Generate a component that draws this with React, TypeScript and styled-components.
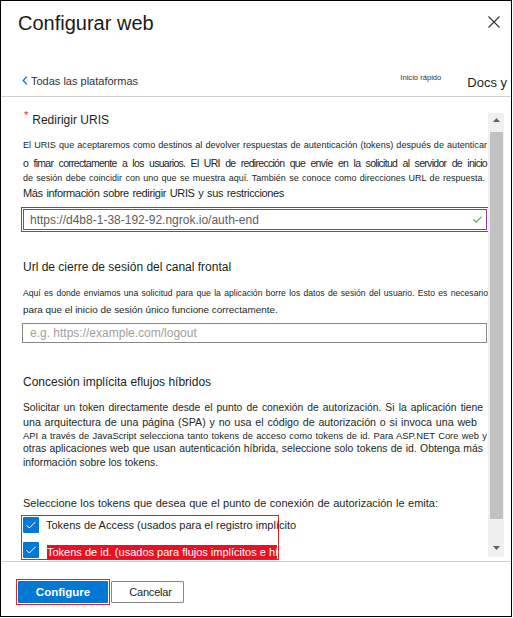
import React from 'react';
import styled, { createGlobalStyle } from 'styled-components';

const GlobalStyle = createGlobalStyle`
  html, body { margin: 0; padding: 0; background: #ffffff; }
  body { font-family: "Liberation Sans", Arial, sans-serif; color: #201f1e; }
  * { box-sizing: border-box; }
`;

const Dialog = styled.div`
  width: 512px;
  height: 617px;
  border: 1px solid #000;
  background: #fff;
  display: flex;
  flex-direction: column;
  overflow: hidden;
`;

const TitleRow = styled.header`
  flex: none;
  height: 44px;
  display: flex;
  align-items: center;
  justify-content: space-between;
  padding: 0 11px 0 17px;
`;

const Title = styled.h1`
  margin: 0;
  font-size: 20px;
  line-height: 24px;
  font-weight: 400;
  color: #1b1a19;
`;

const CloseButton = styled.button`
  border: none;
  background: transparent;
  padding: 0;
  width: 12px;
  height: 12px;
  margin-bottom: 3px;
  display: flex;
  cursor: pointer;
`;

const NavRow = styled.nav`
  flex: none;
  margin-top: 20px;
  height: 31px;
  display: flex;
  align-items: center;
  padding: 0 4px 0 21px;
  overflow: hidden;
  white-space: nowrap;
`;

const BackLink = styled.a`
  display: flex;
  align-items: center;
  gap: 3px;
  font-size: 11px;
  color: #323130;
  text-decoration: none;
`;

const QuickStart = styled.span`
  margin-left: auto;
  margin-bottom: 7px;
  font-size: 7.6px;
  color: #323130;
`;

const DocsLink = styled.span`
  margin-left: 26px;
  margin-top: 4px;
  font-size: 13px;
  color: #201f1e;
`;

const Separator = styled.div`
  flex: none;
  height: 1px;
  background: #d2d0ce;
`;

const ScrollArea = styled.main`
  flex: none;
  height: 464px;
  display: flex;
  overflow: hidden;
`;

const Content = styled.div`
  flex: 1;
  min-width: 0;
  padding-left: 22px;
  display: flex;
  flex-direction: column;
`;

const FieldLabel = styled.div<{ $mt: number }>`
  display: flex;
  align-items: center;
  height: 20px;
  margin-top: ${(p) => p.$mt}px;
  font-size: 12px;
  color: #201f1e;
  white-space: nowrap;
`;

const Required = styled.span`
  align-self: flex-start;
  color: #d13438;
  font-size: 11px;
  line-height: 11px;
  margin: 0 4px 0 1px;
`;

const Line = styled.div<{
  $size: number;
  $lh: number;
  $w?: number;
  $ls?: number;
  $mt?: number;
}>`
  flex: none;
  font-size: ${(p) => p.$size}px;
  line-height: ${(p) => p.$lh}px;
  height: ${(p) => p.$lh}px;
  letter-spacing: ${(p) => p.$ls ?? 0}px;
  margin-top: ${(p) => p.$mt ?? 0}px;
  width: ${(p) => (p.$w ? `${p.$w}px` : 'auto')};
  text-align: ${(p) => (p.$w ? 'justify' : 'left')};
  text-align-last: ${(p) => (p.$w ? 'justify' : 'auto')};
  color: #201f1e;
`;

const RedFrame = styled.div<{ $mt?: number; $w?: number }>`
  flex: none;
  border: 1px solid #e3202c;
  padding: 1px;
  margin-top: ${(p) => p.$mt ?? 0}px;
  margin-left: -2px;
  width: ${(p) => (p.$w ? `${p.$w}px` : 'auto')};
`;

const InputShell = styled.div<{ $border: string; $h: number; $ml?: number; $mt?: number; $pl?: number; $w?: number }>`
  flex: none;
  display: flex;
  align-items: center;
  height: ${(p) => p.$h}px;
  width: ${(p) => (p.$w ? `${p.$w}px` : 'auto')};
  margin-left: ${(p) => p.$ml ?? 0}px;
  margin-top: ${(p) => p.$mt ?? 0}px;
  border: 1px solid ${(p) => p.$border};
  padding: 0 4px 0 ${(p) => p.$pl ?? 6}px;
  background: #fff;
`;

const TextInput = styled.input<{ $tone: string }>`
  flex: 1;
  min-width: 0;
  border: none;
  outline: none;
  background: transparent;
  padding: 0;
  font-family: "Liberation Sans", Arial, sans-serif;
  font-size: 12px;
  color: ${(p) => p.$tone};
  &::placeholder {
    color: #a19f9d;
  }
`;

const CheckGroup = styled.div`
  flex: none;
  margin-top: 3px;
  margin-left: -2px;
  width: 258px;
  height: 45px;
  border: 1px solid #e3202c;
  padding: 1px 0 0 1px;
`;

const CheckRow = styled.label`
  display: flex;
  align-items: flex-start;
  gap: 7px;
  height: 25px;
  white-space: nowrap;
`;

const CheckBox = styled.span`
  flex: none;
  width: 16px;
  height: 16px;
  border-radius: 1px;
  background: #0078d4;
  display: flex;
  align-items: center;
  justify-content: center;
`;

const CheckText = styled.span`
  flex: none;
  display: block;
  font-size: 11px;
  line-height: 16px;
  color: #201f1e;
`;

const HighlightText = styled.span`
  flex: none;
  display: block;
  width: 230px;
  overflow: hidden;
  font-size: 11px;
  line-height: 14px;
  margin-top: 3px;
  margin-left: 1px;
  color: #ffffff;
  background: #e81123;
`;

const Scrollbar = styled.div`
  flex: none;
  width: 16px;
  margin: 16px 7px 4px 0;
  background: #f0f0f0;
  display: flex;
  flex-direction: column;
`;

const ScrollButton = styled.div<{ $h: number; $pt: number }>`
  flex: none;
  height: ${(p) => p.$h}px;
  padding-top: ${(p) => p.$pt}px;
  display: flex;
  justify-content: center;
  align-items: flex-start;
`;

const Thumb = styled.div`
  flex: none;
  height: 387px;
  margin: 0 1px 0 2px;
  background: #c1c1c1;
`;

const TrackRest = styled.div`
  flex: 1;
`;

const Footer = styled.footer`
  flex: 1;
  display: flex;
  align-items: flex-start;
  padding: 17px 0 0 15px;
`;

const ButtonRow = styled.div`
  display: flex;
  align-items: center;
  gap: 1px;
`;

const ButtonFrame = styled.div`
  border: 1px solid #e3202c;
  padding: 1px;
`;

const PrimaryButton = styled.button`
  width: 90px;
  height: 22px;
  border: none;
  border-radius: 1px;
  background: #0078d4;
  color: #fff;
  font-family: "Liberation Sans", Arial, sans-serif;
  font-weight: 700;
  font-size: 11.5px;
  padding: 0;
  display: block;
`;

const SecondaryButton = styled.button`
  width: 73px;
  height: 22px;
  border: 1px solid #8a8886;
  border-radius: 1px;
  background: #fff;
  color: #201f1e;
  font-family: "Liberation Sans", Arial, sans-serif;
  font-size: 11px;
  letter-spacing: -0.2px;
  padding: 0 0 0 6px;
`;

const Tri = ({ down }: { down?: boolean }) => (
  <svg width="7" height="4" viewBox="0 0 7 4">
    <polygon points={down ? '0,0 7,0 3.5,4' : '0,4 7,4 3.5,0'} fill="#606060" />
  </svg>
);

const WhiteCheck = () => (
  <svg width="12" height="10" viewBox="0 0 12 10">
    <polyline points="1.5,5.2 4.3,8 10.5,1.8" fill="none" stroke="#ffffff" strokeWidth="1" />
  </svg>
);

export default function App() {
  return (
    <>
      <GlobalStyle />
      <Dialog>
        <TitleRow>
          <Title>Configurar web</Title>
          <CloseButton aria-label="Cerrar">
            <svg width="12" height="12" viewBox="0 0 12 12">
              <path d="M0.5 0.5 L11.5 11.5 M11.5 0.5 L0.5 11.5" stroke="#323130" strokeWidth="1.1" />
            </svg>
          </CloseButton>
        </TitleRow>
        <NavRow>
          <BackLink href="#">
            <svg width="6" height="9" viewBox="0 0 6 9">
              <path d="M4.8 0.6 L1.2 4.5 L4.8 8.4" fill="none" stroke="#0078d4" strokeWidth="1.3" />
            </svg>
            Todas las plataformas
          </BackLink>
          <QuickStart>Inicio rápido</QuickStart>
          <DocsLink>Docs y</DocsLink>
        </NavRow>
        <Separator />
        <ScrollArea>
          <Content>
            <FieldLabel $mt={13}>
              <Required>*</Required>
              Redirigir URIS
            </FieldLabel>
            <Line $size={9.1} $lh={18} $w={464} $mt={6}>
              El URIS que aceptaremos como destinos al devolver respuestas de autenticación (tokens) después de autenticar
            </Line>
            <Line $size={10.5} $lh={18} $w={464} $ls={-0.7}>
              o fimar correctamente a los usuarios. El URI de redirección que envíe en la solicitud al servidor de inicio
            </Line>
            <Line $size={9} $lh={12} $w={462}>
              de sesión debe coincidir con uno que se muestra aquí. También se conoce como direcciones URL de respuesta.
            </Line>
            <Line $size={11} $lh={18} $w={261} $ls={-0.35}>
              Más información sobre redirigir URIS y sus restricciones
            </Line>
            <RedFrame $mt={5} $w={468}>
              <InputShell $border="#8a3ab9" $h={21}>
                <TextInput $tone="#605e5c" readOnly value="https://d4b8-1-38-192-92.ngrok.io/auth-end" />
                <svg width="9" height="7" viewBox="0 0 9 7">
                  <polyline points="0.5,3.5 3.2,6.2 8.5,0.7" fill="none" stroke="#5aa84a" strokeWidth="1.1" />
                </svg>
              </InputShell>
            </RedFrame>

            <FieldLabel $mt={25}>Url de cierre de sesión del canal frontal</FieldLabel>
            <Line $size={8.6} $lh={16} $w={465} $mt={8}>
              Aquí es donde enviamos una solicitud para que la aplicación borre los datos de sesión del usuario. Esto es necesario
            </Line>
            <Line $size={9.9} $lh={18}>
              para que el inicio de sesión único funcione correctamente.
            </Line>
            <InputShell $border="#8a8886" $h={20} $ml={-1} $mt={4} $pl={7} $w={465}>
              <TextInput $tone="#323130" placeholder="e.g. https://example.com/logout" />
            </InputShell>

            <FieldLabel $mt={29}>Concesión implícita eflujos híbridos</FieldLabel>
            <Line $size={10.3} $lh={15} $w={460} $mt={8}>
              Solicitar un token directamente desde el punto de conexión de autorización. Si la aplicación tiene
            </Line>
            <Line $size={10.7} $lh={14} $w={454}>
              una arquitectura de una página (SPA) y no usa el código de autorización o si invoca una web
            </Line>
            <Line $size={9.4} $lh={13} $w={464}>
              API a través de JavaScript selecciona tanto tokens de acceso como tokens de id. Para ASP.NET Core web y
            </Line>
            <Line $size={10.4} $lh={14} $w={460}>
              otras aplicaciones web que usan autenticación híbrida, seleccione solo tokens de id. Obtenga más
            </Line>
            <Line $size={10.4} $lh={14}>
              información sobre los tokens.
            </Line>

            <Line $size={11} $lh={18} $w={415} $mt={24}>
              Seleccione los tokens que desea que el punto de conexión de autorización le emita:
            </Line>
            <CheckGroup>
              <CheckRow>
                <CheckBox>
                  <WhiteCheck />
                </CheckBox>
                <CheckText>Tokens de Access (usados para el registro implícito</CheckText>
              </CheckRow>
              <CheckRow>
                <CheckBox>
                  <WhiteCheck />
                </CheckBox>
                <HighlightText>Tokens de id. (usados para flujos implícitos e híbridos)</HighlightText>
              </CheckRow>
            </CheckGroup>
          </Content>
          <Scrollbar>
            <ScrollButton $h={19} $pt={5}>
              <Tri />
            </ScrollButton>
            <Thumb />
            <TrackRest />
            <ScrollButton $h={17} $pt={6}>
              <Tri down />
            </ScrollButton>
          </Scrollbar>
        </ScrollArea>
        <Separator />
        <Footer>
          <ButtonRow>
            <ButtonFrame>
              <PrimaryButton>Configure</PrimaryButton>
            </ButtonFrame>
            <SecondaryButton>Cancelar</SecondaryButton>
          </ButtonRow>
        </Footer>
      </Dialog>
    </>
  );
}
